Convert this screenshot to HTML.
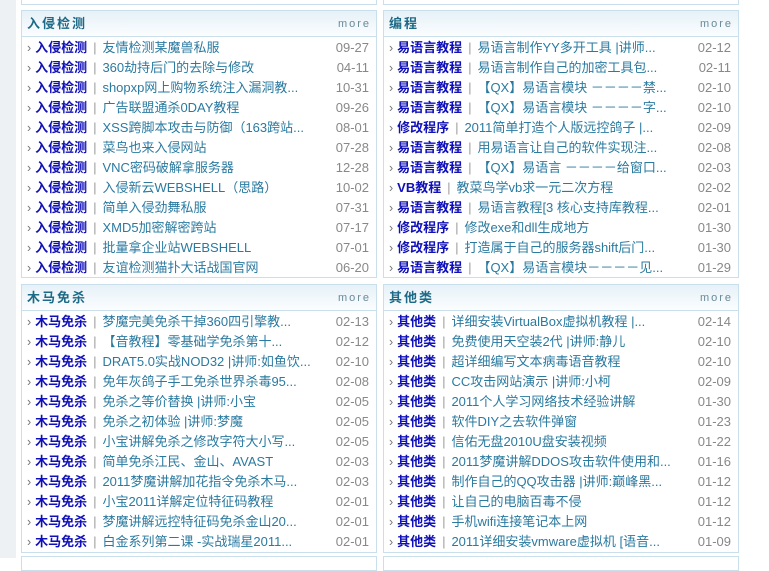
<!DOCTYPE html>
<html><head><meta charset="utf-8"><style>
*{margin:0;padding:0;box-sizing:border-box}
body{width:769px;height:558px;overflow:hidden;background:#fff;font-family:"Liberation Sans","Noto Sans CJK SC",sans-serif;font-size:12px;position:relative}
.strip{position:absolute;left:0;top:0;width:16px;height:558px;background:#eef1f4}
.p{position:absolute;border:1px solid #c9dfeb;background:#fff}
.h{height:26px;line-height:25px;background:linear-gradient(#e6f1f8,#fbfdfe);border-bottom:1px solid #c9dfeb;position:relative}
.h b{position:absolute;left:5px;top:0;font-size:13px;color:#1d6a86;letter-spacing:2px}
.h i{position:absolute;right:5px;top:1px;font-style:normal;font-size:11px;color:#6b8a98;letter-spacing:2px}
ul{list-style:none;padding-top:1px}
li{height:20px;line-height:20px;position:relative;padding-left:5px;white-space:nowrap;font-size:12.5px}
li:before{content:"›";color:#777;margin-right:4px}
li b{color:#1010b8;font-size:13px}
li s{text-decoration:none;color:#999;margin:0 6px}
li span{color:#2a7aa0;font-size:13px}
li em{position:absolute;right:7px;top:0;font-style:normal;color:#888;font-size:13px}
</style></head><body>
<div class="strip"></div>
<div class="p" style="left:21px;top:-10px;width:356px;height:15px"></div>
<div class="p" style="left:383px;top:-10px;width:356px;height:15px"></div>
<div class="p" style="left:21px;top:556px;width:356px;height:15px"></div>
<div class="p" style="left:383px;top:556px;width:356px;height:15px"></div>

<div class="p" style="left:21px;top:10px;width:356px;height:268px">
<div class="h"><b>入侵检测</b><i>more</i></div><ul>
<li><b>入侵检测</b><s>|</s><span>友情检测某魔兽私服</span><em>09-27</em></li>
<li><b>入侵检测</b><s>|</s><span>360劫持后门的去除与修改</span><em>04-11</em></li>
<li><b>入侵检测</b><s>|</s><span>shopxp网上购物系统注入漏洞教...</span><em>10-31</em></li>
<li><b>入侵检测</b><s>|</s><span>广告联盟通杀0DAY教程</span><em>09-26</em></li>
<li><b>入侵检测</b><s>|</s><span>XSS跨脚本攻击与防御（163跨站...</span><em>08-01</em></li>
<li><b>入侵检测</b><s>|</s><span>菜鸟也来入侵网站</span><em>07-28</em></li>
<li><b>入侵检测</b><s>|</s><span>VNC密码破解拿服务器</span><em>12-28</em></li>
<li><b>入侵检测</b><s>|</s><span>入侵新云WEBSHELL（思路）</span><em>10-02</em></li>
<li><b>入侵检测</b><s>|</s><span>简单入侵劲舞私服</span><em>07-31</em></li>
<li><b>入侵检测</b><s>|</s><span>XMD5加密解密跨站</span><em>07-17</em></li>
<li><b>入侵检测</b><s>|</s><span>批量拿企业站WEBSHELL</span><em>07-01</em></li>
<li><b>入侵检测</b><s>|</s><span>友谊检测猫扑大话战国官网</span><em>06-20</em></li>
</ul></div>

<div class="p" style="left:383px;top:10px;width:356px;height:268px">
<div class="h"><b>编程</b><i>more</i></div><ul>
<li><b>易语言教程</b><s>|</s><span>易语言制作YY多开工具 |讲师...</span><em>02-12</em></li>
<li><b>易语言教程</b><s>|</s><span>易语言制作自己的加密工具包...</span><em>02-11</em></li>
<li><b>易语言教程</b><s>|</s><span>【QX】易语言模块 －－－－禁...</span><em>02-10</em></li>
<li><b>易语言教程</b><s>|</s><span>【QX】易语言模块 －－－－字...</span><em>02-10</em></li>
<li><b>修改程序</b><s>|</s><span>2011简单打造个人版远控鸽子 |...</span><em>02-09</em></li>
<li><b>易语言教程</b><s>|</s><span>用易语言让自己的软件实现注...</span><em>02-08</em></li>
<li><b>易语言教程</b><s>|</s><span>【QX】易语言 －－－－给窗口...</span><em>02-03</em></li>
<li><b>VB教程</b><s>|</s><span>教菜鸟学vb求一元二次方程</span><em>02-02</em></li>
<li><b>易语言教程</b><s>|</s><span>易语言教程[3 核心支持库教程...</span><em>02-01</em></li>
<li><b>修改程序</b><s>|</s><span>修改exe和dll生成地方</span><em>01-30</em></li>
<li><b>修改程序</b><s>|</s><span>打造属于自己的服务器shift后门...</span><em>01-30</em></li>
<li><b>易语言教程</b><s>|</s><span>【QX】易语言模块－－－－见...</span><em>01-29</em></li>
</ul></div>

<div class="p" style="left:21px;top:284px;width:356px;height:269px">
<div class="h"><b>木马免杀</b><i>more</i></div><ul>
<li><b>木马免杀</b><s>|</s><span>梦魔完美免杀干掉360四引擎教...</span><em>02-13</em></li>
<li><b>木马免杀</b><s>|</s><span>【音教程】零基础学免杀第十...</span><em>02-12</em></li>
<li><b>木马免杀</b><s>|</s><span>DRAT5.0实战NOD32 |讲师:如鱼饮...</span><em>02-10</em></li>
<li><b>木马免杀</b><s>|</s><span>免年灰鸽子手工免杀世界杀毒95...</span><em>02-08</em></li>
<li><b>木马免杀</b><s>|</s><span>免杀之等价替换 |讲师:小宝</span><em>02-05</em></li>
<li><b>木马免杀</b><s>|</s><span>免杀之初体验 |讲师:梦魔</span><em>02-05</em></li>
<li><b>木马免杀</b><s>|</s><span>小宝讲解免杀之修改字符大小写...</span><em>02-05</em></li>
<li><b>木马免杀</b><s>|</s><span>简单免杀江民、金山、AVAST</span><em>02-03</em></li>
<li><b>木马免杀</b><s>|</s><span>2011梦魔讲解加花指令免杀木马...</span><em>02-03</em></li>
<li><b>木马免杀</b><s>|</s><span>小宝2011详解定位特征码教程</span><em>02-01</em></li>
<li><b>木马免杀</b><s>|</s><span>梦魔讲解远控特征码免杀金山20...</span><em>02-01</em></li>
<li><b>木马免杀</b><s>|</s><span>白金系列第二课 -实战瑞星2011...</span><em>02-01</em></li>
</ul></div>

<div class="p" style="left:383px;top:284px;width:356px;height:269px">
<div class="h"><b>其他类</b><i>more</i></div><ul>
<li><b>其他类</b><s>|</s><span>详细安装VirtualBox虚拟机教程 |...</span><em>02-14</em></li>
<li><b>其他类</b><s>|</s><span>免费使用天空装2代 |讲师:静儿</span><em>02-10</em></li>
<li><b>其他类</b><s>|</s><span>超详细编写文本病毒语音教程</span><em>02-10</em></li>
<li><b>其他类</b><s>|</s><span>CC攻击网站演示 |讲师:小柯</span><em>02-09</em></li>
<li><b>其他类</b><s>|</s><span>2011个人学习网络技术经验讲解</span><em>01-30</em></li>
<li><b>其他类</b><s>|</s><span>软件DIY之去软件弹窗</span><em>01-23</em></li>
<li><b>其他类</b><s>|</s><span>信佑无盘2010U盘安装视频</span><em>01-22</em></li>
<li><b>其他类</b><s>|</s><span>2011梦魔讲解DDOS攻击软件使用和...</span><em>01-16</em></li>
<li><b>其他类</b><s>|</s><span>制作自己的QQ攻击器 |讲师:巅峰黑...</span><em>01-12</em></li>
<li><b>其他类</b><s>|</s><span>让自己的电脑百毒不侵</span><em>01-12</em></li>
<li><b>其他类</b><s>|</s><span>手机wifi连接笔记本上网</span><em>01-12</em></li>
<li><b>其他类</b><s>|</s><span>2011详细安装vmware虚拟机 [语音...</span><em>01-09</em></li>
</ul></div>
</body></html>
